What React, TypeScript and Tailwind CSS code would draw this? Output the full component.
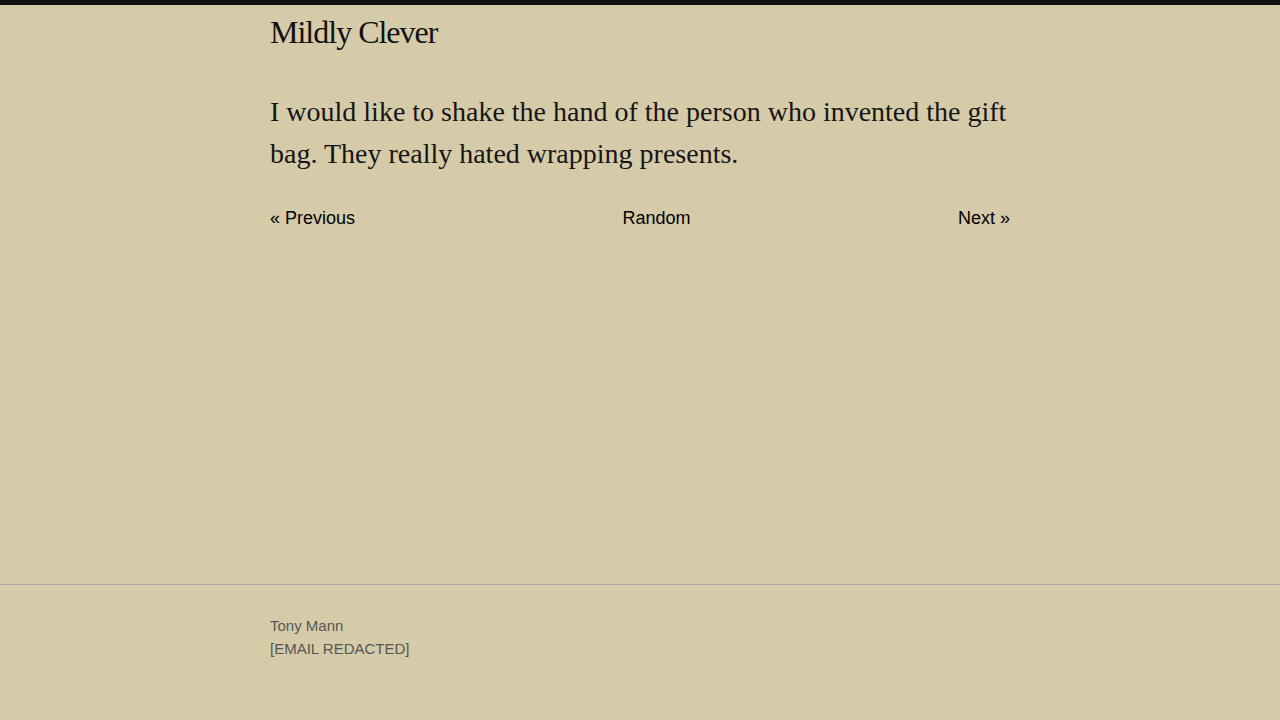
export default function App() {
  return (
    <div className="min-h-screen flex flex-col bg-[#d5cba8] border-t-[5px] border-[#111111]">
      <main className="flex-1 w-[740px] mx-auto">
        <h1 className="mt-[8px] text-[32px] leading-[38px] tracking-[-1px] text-[#111111] font-['Liberation_Serif',serif]">
          Mildly Clever
        </h1>
        <p className="mt-[40px] text-[28px] leading-[42px] text-[#151515] font-['Liberation_Serif',serif]">
          I would like to shake the hand of the person who invented the gift bag. They really hated wrapping presents.
        </p>
        <nav className="mt-[30px] flex justify-between text-[18px] leading-[27px] text-black font-['Liberation_Sans',sans-serif]">
          <a href="#">« Previous</a>
          <a href="#">Random</a>
          <a href="#">Next »</a>
        </nav>
      </main>
      <footer className="border-t border-[#a9aab0] pt-[29px] pb-[60px]">
        <div className="w-[740px] mx-auto text-[15px] leading-[23px] text-[#555555] font-['Liberation_Sans',sans-serif]">
          <div>Tony Mann</div>
          <div>[EMAIL REDACTED]</div>
        </div>
      </footer>
    </div>
  );
}
